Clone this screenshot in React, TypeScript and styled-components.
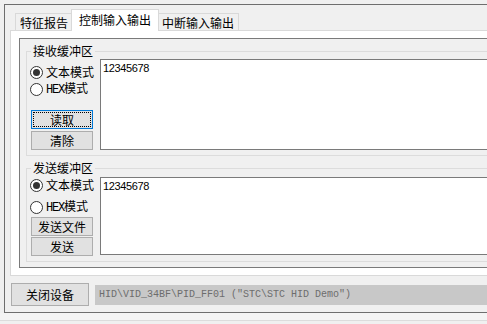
import styled, {createGlobalStyle} from 'styled-components';

const GlobalStyle = createGlobalStyle`
  html, body {
    margin: 0;
    background: #f0f0f0;
    overflow: hidden;
  }
  * {
    box-sizing: border-box;
  }
`

const cjk = `"Noto Sans CJK SC", "Microsoft YaHei", sans-serif`

type GroupData = {
    title: string
    text: string
    buttons: string[]
    focused?: number
    bodyTop: number
    boxHeight: number
    rowTop: number
    rowGap: number
    btnTop: number
    btnGap: number
}

const groups: GroupData[] = [
    {title: '接收缓冲区', text: '12345678', buttons: ['读取', '清除'], focused: 0,
        bodyTop: 1, boxHeight: 91, rowTop: 5, rowGap: 1, btnTop: 13, btnGap: 2},
    {title: '发送缓冲区', text: '12345678', buttons: ['发送文件', '发送'],
        bodyTop: 2, boxHeight: 78, rowTop: 0, rowGap: 6, btnTop: 2, btnGap: 1},
]

const tabs = ['特征报告', '控制输入输出', '中断输入输出']

const Radio = ({checked, children}: { checked?: boolean, children: React.ReactNode }) => (
    <RadioLabel>
        <RadioCircle $checked={checked}/>
        <span>{children}</span>
    </RadioLabel>
)

const Group = ({data, first}: { data: GroupData, first?: boolean }) => (
    <Fieldset $first={first}>
        <Legend>{data.title}</Legend>
        <GroupBody $top={data.bodyTop}>
            <LeftCol>
                <RadioList $top={data.rowTop} $gap={data.rowGap}>
                    <Radio checked>文本模式</Radio>
                    <Radio><Hex>HEX</Hex>模式</Radio>
                </RadioList>
                <ButtonList $top={data.btnTop} $gap={data.btnGap}>
                    {data.buttons.map((b, i) => (
                        <SmallButton key={b} $focused={data.focused === i}>{b}</SmallButton>
                    ))}
                </ButtonList>
            </LeftCol>
            <TextBox $height={data.boxHeight}>{data.text}</TextBox>
        </GroupBody>
    </Fieldset>
)

export default function App() {
    return (
        <>
            <GlobalStyle/>
            <Page>
                <Window>
                    <TabStrip>
                        {tabs.map((t, i) => (
                            <Tab key={t} $active={i === 1}>{t}</Tab>
                        ))}
                    </TabStrip>
                    <TabPanel>
                        <InnerPanel>
                            {groups.map((g, i) => <Group key={g.title} data={g} first={i === 0}/>)}
                        </InnerPanel>
                    </TabPanel>
                    <BottomBar>
                        <CloseButton>关闭设备</CloseButton>
                        <StatusField>HID\VID_34BF\PID_FF01 ("STC\STC HID Demo")</StatusField>
                    </BottomBar>
                </Window>
                <Footer/>
            </Page>
        </>
    )
}

const Page = styled.div`
  width: 487px;
  height: 324px;
  overflow: hidden;
  padding: 4px 0 0 4px;
  display: flex;
  flex-direction: column;
  font-family: ${cjk};
  font-size: 12px;
  color: #000;
`

const Window = styled.div`
  width: 560px;
  height: 309px;
  flex-shrink: 0;
  border: 1px solid #6e6e6e;
  border-right: none;
  padding: 4px 0 0 5px;
  display: flex;
  flex-direction: column;
`

const TabStrip = styled.div`
  display: flex;
  align-items: flex-end;
  height: 21px;
  padding-left: 5px;
`

const Tab = styled.div<{ $active?: boolean }>`
  position: relative;
  display: flex;
  align-items: center;
  justify-content: center;
  border: 1px solid #d9d9d9;
  white-space: nowrap;
  line-height: 14px;
  ${p => p.$active ? `
    height: 22px;
    margin: 0 -2px -1px;
    padding: 0 7px 1px;
    background: #fff;
    border-bottom: none;
    z-index: 1;
  ` : `
    height: 17px;
    padding: 2px 4px 0;
    background: #f0f0f0;
    border-bottom: none;
  `}
`

const TabPanel = styled.div`
  height: 246px;
  border: 1px solid #d9d9d9;
  border-right: none;
  background: #fff;
  padding: 7px 0 7px 8px;
`

const InnerPanel = styled.div`
  height: 230px;
  border: 1px solid #7a7a7a;
  border-right: none;
  background: #f0f0f0;
  padding: 5px 0 6px 6px;
`

const Fieldset = styled.fieldset<{ $first?: boolean }>`
  margin: ${p => p.$first ? '0' : '5px 0 0'};
  padding: 0 0 5px 0;
  min-width: 0;
  border: 1px solid #dcdcdc;
  border-right: none;
`

const Legend = styled.legend`
  padding: 0 2px;
  margin-left: 4px;
  line-height: 14px;
  font-size: 12px;
`

const GroupBody = styled.div<{ $top: number }>`
  display: flex;
  padding-top: ${p => p.$top}px;
`

const LeftCol = styled.div`
  width: 73px;
  flex-shrink: 0;
  display: flex;
  flex-direction: column;
  padding-left: 3px;
`

const RadioList = styled.div<{ $top: number, $gap: number }>`
  display: flex;
  flex-direction: column;
  margin-top: ${p => p.$top}px;
  gap: ${p => p.$gap}px;
`

const RadioLabel = styled.div`
  display: flex;
  align-items: center;
  gap: 3px;
  height: 16px;
  line-height: 14px;
  white-space: nowrap;
`

const RadioCircle = styled.span<{ $checked?: boolean }>`
  position: relative;
  width: 13px;
  height: 13px;
  border: 1px solid #333;
  border-radius: 50%;
  background: #fff;
  flex-shrink: 0;

  &:after {
    content: '';
    display: ${p => p.$checked ? 'block' : 'none'};
    position: absolute;
    left: 2px;
    top: 2px;
    width: 7px;
    height: 7px;
    border-radius: 50%;
    background: #333;
  }
`

const Hex = styled.span`
  font-family: "Liberation Mono", monospace;
  font-size: 12px;
  letter-spacing: -1.2px;
`

const ButtonList = styled.div<{ $top: number, $gap: number }>`
  display: flex;
  flex-direction: column;
  margin-top: ${p => p.$top}px;
  margin-left: 1px;
  gap: ${p => p.$gap}px;
`

const SmallButton = styled.div<{ $focused?: boolean }>`
  position: relative;
  width: 62px;
  height: 19px;
  display: flex;
  align-items: center;
  justify-content: center;
  background: #e1e1e1;
  border: 1px solid ${p => p.$focused ? '#0078d7' : '#adadad'};
  line-height: 14px;
  white-space: nowrap;

  &:after {
    content: '';
    display: ${p => p.$focused ? 'block' : 'none'};
    position: absolute;
    inset: 1px;
    border: 1px dotted #000;
  }
`

const TextBox = styled.div<{ $height: number }>`
  flex: 1;
  height: ${p => p.$height}px;
  border: 1px solid #7a7a7a;
  border-right: none;
  background: #fff;
  padding: 2px 2px;
  font-family: "Liberation Sans", sans-serif;
  font-size: 11px;
  letter-spacing: -0.35px;
  line-height: 13px;
`

const BottomBar = styled.div`
  display: flex;
  align-items: center;
  gap: 6px;
  margin-top: 7px;
  padding-left: 1px;
`

const CloseButton = styled.div`
  width: 78px;
  height: 23px;
  display: flex;
  align-items: center;
  justify-content: center;
  background: #e1e1e1;
  border: 1px solid #adadad;
  line-height: 14px;
`

const StatusField = styled.div`
  flex: 1;
  height: 20px;
  background: #c8c8c8;
  display: flex;
  align-items: center;
  padding-left: 4px;
  font-family: "Liberation Mono", monospace;
  font-size: 10px;
  color: #6d6d6d;
  white-space: nowrap;
`

const Footer = styled.div`
  margin-left: -4px;
  height: 8px;
  flex-shrink: 0;
  background: #f4f4f4;
  border-bottom: 1px solid #dcdcdc;
`
